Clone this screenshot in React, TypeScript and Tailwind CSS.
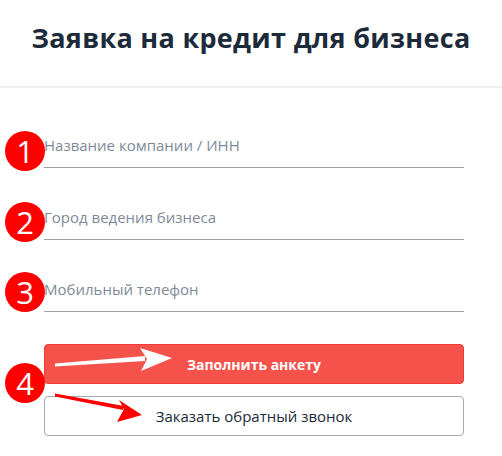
import React from "react";

const font = { fontFamily: '"Open Sans", "Noto Sans", sans-serif' };

function Badge({ n, className }: { n: number; className: string }) {
  return (
    <span
      className={`absolute flex h-[40px] w-[40px] items-center justify-center rounded-full bg-[#ff0000] text-[31px] leading-none text-white ${className}`}
    >
      {n}
    </span>
  );
}

function Field({ placeholder }: { placeholder: string }) {
  return (
    <input
      type="text"
      placeholder={placeholder}
      className="h-[40px] w-full border-b border-[#9aa1aa] bg-transparent pb-[5px] text-[15px] text-[#333] outline-none placeholder:text-[#7e8a99]"
    />
  );
}

export default function App() {
  return (
    <div className="relative h-[456px] w-[502px] overflow-hidden bg-white" style={font}>
      <header className="flex h-[88px] items-center justify-center border-b-2 border-[#efefef] pb-[10px]">
        <h1 className="text-[27px] font-bold tracking-[0.3px] text-[#1c2a3a]">
          Заявка на кредит для бизнеса
        </h1>
      </header>

      <form className="flex flex-col pl-[44px] pr-[38px] pt-[40px]">
        <div className="flex flex-col gap-[32px]">
          <Field placeholder="Название компании / ИНН" />
          <Field placeholder="Город ведения бизнеса" />
          <Field placeholder="Мобильный телефон" />
        </div>

        <button
          type="button"
          className="mt-[32px] h-[40px] rounded-[4px] border border-[#ee3b33] bg-[#f4524b] text-[14px] font-bold text-white"
        >
          Заполнить анкету
        </button>
        <button
          type="button"
          className="mt-[12px] h-[40px] rounded-[4px] border border-[#a5abb2] bg-white text-[15px] text-[#1c2a3a]"
        >
          Заказать обратный звонок
        </button>
      </form>

      {/* annotation badges */}
      <Badge n={1} className="left-[5px] top-[131px]" />
      <Badge n={2} className="left-[5px] top-[202px]" />
      <Badge n={3} className="left-[5px] top-[272px]" />
      <Badge n={4} className="left-[5px] top-[363px]" />

      {/* annotation arrows */}
      <svg className="pointer-events-none absolute left-0 top-0" width="502" height="456">
        <polygon points="55,363.5 145,356 145,361 55,366.5" fill="#fff" />
        <polygon points="140,348 172,358 141,371 147,359" fill="#fff" />
        <polygon points="55,393.5 124,406 123,410 55,396.5" fill="#ff0000" />
        <polygon points="119,400 142,415 117,422 124,409" fill="#ff0000" />
      </svg>
    </div>
  );
}
